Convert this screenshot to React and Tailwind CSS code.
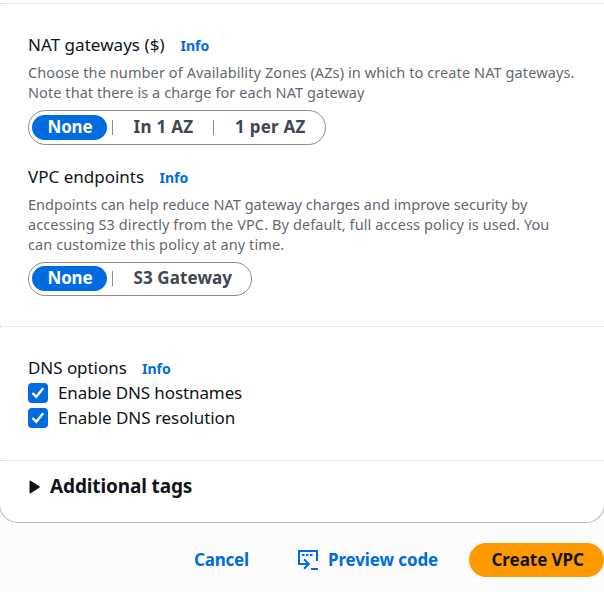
import React from 'react';

function Info({ className = 'pt-px' }) {
  return (
    <a className={`pl-[0.5px] text-[14px] leading-5 font-bold text-[#006ce0] ${className}`}>Info</a>
  );
}

function Divider() {
  return (
    <div className="flex h-px">
      <div className="w-px bg-[#b4b4bb]" />
      <div className="flex-1 bg-[#ebebf0]" />
    </div>
  );
}

function Bar() {
  return <div className="h-[15px] w-px shrink-0 bg-[#8c8c94]" />;
}

function Selected({ className = 'pb-px' }) {
  return (
    <div className="flex h-[25px] w-[75px] shrink-0 items-center justify-center rounded-full bg-[#006ce0] text-white">
      <span className={`pl-px tracking-[-0.2px] ${className}`}>None</span>
    </div>
  );
}

function Check({ children, className }) {
  return (
    <label className="flex h-[25px] items-center gap-[10px] text-[17px] text-[#0f141a]">
      <span className="flex size-5 items-center justify-center rounded-[4px] bg-[#006ce0]">
        <svg width="20" height="20" viewBox="0 0 20 20" fill="none" stroke="#fff" strokeWidth="2.4">
          <path d="M4.4 10 8.3 13.8 15.2 5.2" />
        </svg>
      </span>
      <span className={`whitespace-nowrap ${className}`}>{children}</span>
    </label>
  );
}

export default function App() {
  return (
    <div className="h-[592px] w-[604px] overflow-hidden bg-[#fcfcfd] font-['Noto_Sans',sans-serif] text-[#0f141a]">
      <main className="-mx-px h-[523px] overflow-hidden rounded-b-[19px] border-x border-b border-[#b9b9c0] bg-white pt-[3px]">
        <Divider />
        <section className="h-[322px] px-7 pt-[29px]">
          <div className="flex h-6 items-center whitespace-nowrap text-[17px]">
            <span className="w-[152px] tracking-[0.04px]">NAT gateways ($)</span>
            <Info />
          </div>
          <div className="mt-[5px] mb-2 whitespace-nowrap text-[14.5px] leading-5 text-[#656871]">
            <p className="tracking-[0.1px]">Choose the number of Availability Zones (AZs) in which to create NAT gateways.</p>
            <p className="tracking-[0.07px]">Note that there is a charge for each NAT gateway</p>
          </div>
          <div className="flex h-[35px] w-[298px] items-center rounded-full border border-[#8c8c94] pl-[3px] text-[17px] font-bold whitespace-nowrap text-[#424650]">
            <Selected />
            <div className="w-[5px]" />
            <Bar />
            <div className="w-[100px] pb-px pl-[20.5px] tracking-[0.3px]">In 1 AZ</div>
            <Bar />
            <div className="pb-px pl-[21px] tracking-[0.25px]">1 per AZ</div>
          </div>
          <div className="mt-5 flex h-6 items-center whitespace-nowrap text-[17px]">
            <span className="w-[131px] tracking-[0px]">VPC endpoints</span>
            <Info />
          </div>
          <div className="mt-[5px] mb-2 whitespace-nowrap text-[14.5px] leading-5 text-[#656871]">
            <p className="tracking-[0.04px]">Endpoints can help reduce NAT gateway charges and improve security by</p>
            <p className="tracking-[0.1px]">accessing S3 directly from the VPC. By default, full access policy is used. You</p>
            <p className="tracking-[0.09px]">can customize this policy at any time.</p>
          </div>
          <div className="flex h-[34px] w-[224px] items-center rounded-full border border-[#8c8c94] pb-px pl-[3px] text-[17px] font-bold whitespace-nowrap text-[#424650]">
            <Selected />
            <div className="w-[5px]" />
            <Bar />
            <div className="pb-px pl-[20.5px] tracking-[0.1px]">S3 Gateway</div>
          </div>
        </section>
        <Divider />
        <section className="h-[133px] px-7 pt-[28px]">
          <div className="flex h-[25px] items-center whitespace-nowrap text-[17px]">
            <span className="w-[113.5px] tracking-[-0.05px]">DNS options</span>
            <Info className="pt-[2px]" />
          </div>
          <Check className="tracking-[-0.1px]">Enable DNS hostnames</Check>
          <Check className="tracking-[-0.05px]">Enable DNS resolution</Check>
        </section>
        <Divider />
        <div className="flex h-[51px] items-center gap-[10px] pl-[29px] text-[19px] font-bold">
          <svg width="11" height="14" viewBox="0 0 11 14" fill="#0f141a">
            <path d="M.5 1.4Q.5 0 1.7.8L10.3 6.3Q11.3 7 10.3 7.7L1.7 13.2Q.5 14 .5 12.6Z" />
          </svg>
          <span className="whitespace-nowrap tracking-[-0.13px]">Additional tags</span>
        </div>
      </main>
      <footer className="flex h-[54px] items-end text-[17px] font-bold whitespace-nowrap text-[#006ce0]">
        <div className="flex h-[34px] w-[298px] items-center pl-[194px] tracking-[-0.2px]">Cancel</div>
        <div className="flex h-[34px] w-[171px] items-center">
          <svg width="21" height="21" viewBox="0 0 21 21" fill="none" stroke="#006ce0" strokeWidth="2">
            <path d="M1 14V1H19V11M0 14H10M6 9.2 10.8 14 6 18.8M13 19H20" />
            <path d="M4 5H6.5M8 5H10.5M12 5H14.5" strokeWidth="2.2" />
          </svg>
          <span className="ml-[9px] tracking-[-0.12px]">Preview code</span>
        </div>
        <div className="flex h-[34px] w-[135px] items-center rounded-full bg-[#ff9900] pl-[22.5px] text-[#0f141a]">
          <span className="tracking-[-0.05px]">Create VPC</span>
        </div>
      </footer>
    </div>
  );
}
